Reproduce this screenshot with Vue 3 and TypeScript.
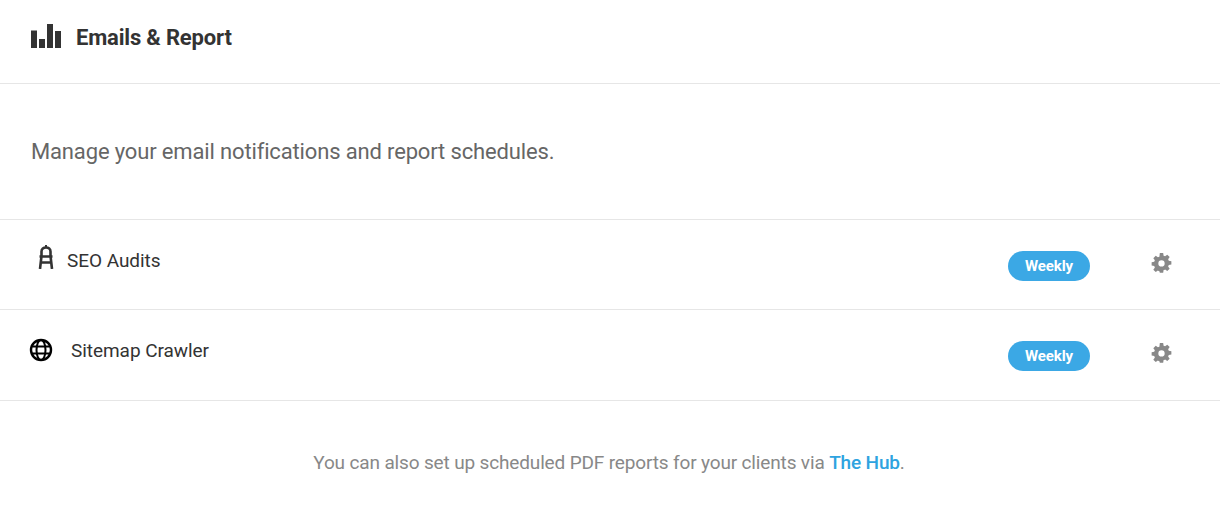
<script setup lang="ts">
const rows = [
  { name: 'SEO Audits', icon: 'tower', frequency: 'Weekly' },
  { name: 'Sitemap Crawler', icon: 'globe', frequency: 'Weekly' }
];

const gearPath =
  'M8.4 0h3.200l.4 2.500c.5.2 1 .4 1.400.6l2.100-1.500 2.300 2.300-1.500 2.100c.3.4.5.9.6 1.400l2.500.4v3.200l-2.500.4c-.1.5-.3 1-.6 1.400l1.500 2.100-2.300 2.300-2.100-1.500c-.4.3-.9.5-1.400.6l-.4 2.500H8.400L8 17.300c-.5-.1-1-.3-1.400-.6l-2.100 1.500-2.300-2.300 1.500-2.100c-.3-.4-.5-.9-.6-1.400L.6 12V8.800L3.100 8.400c.1-.5.3-1 .6-1.400L2.200 4.900l2.300-2.300 2.100 1.500c.4-.3.9-.5 1.400-.6zM10 6.900a3 3 0 1 0 0 6 3 3 0 0 0 0-6z';
</script>

<template>
  <div class="box">
    <header class="box-title">
      <svg class="chart-icon" width="30" height="24" viewBox="0 0 30 24">
        <rect x="0" y="6.500" width="6" height="17.500" />
        <rect x="8" y="15" width="6" height="9" />
        <rect x="16" y="0" width="6" height="24" />
        <rect x="24" y="7" width="6" height="17" />
      </svg>
      <h2>Emails &amp; Report</h2>
    </header>

    <p class="intro">Manage your email notifications and report schedules.</p>

    <div v-for="row in rows" :key="row.name" class="row">
      <div class="row-name" :class="row.icon">
        <svg v-if="row.icon === 'tower'" class="tower-icon" width="16" height="24" viewBox="0 0 16 24" fill="none" stroke="#333" stroke-width="2.600">
          <path d="M3.500 11.500V6.500C3.500 4 5.500 2.500 8 2.500S12.500 4 12.500 6.500v5" />
          <path d="M1.500 11.500h13M3.500 11 2 24M12.500 11 14 24M2.500 17.500h11" />
          <path d="M8 0v2" stroke-width="2" />
        </svg>
        <svg v-else class="globe-icon" width="24" height="24" viewBox="0 0 24 24" fill="none" stroke="#000" stroke-width="2.400">
          <circle cx="12" cy="12" r="10" />
          <ellipse cx="12" cy="12" rx="4.500" ry="10" stroke-width="2" />
          <path d="M2.500 8.500h19M2.500 15.500h19" stroke-width="2" />
        </svg>
        <span>{{ row.name }}</span>
      </div>
      <span class="tag">{{ row.frequency }}</span>
      <button class="gear" aria-label="Configure">
        <svg width="21" height="21" viewBox="0 0 20 20"><path :d="gearPath" fill="#888" fill-rule="evenodd" /></svg>
      </button>
    </div>

    <p class="note">You can also set up scheduled PDF reports for your clients via <a href="#">The Hub</a>.</p>
  </div>
</template>

<style scoped>
.box {
  font-family: Roboto, sans-serif;
  color: #666;
  background: #fff;
}

.box-title {
  display: flex;
  align-items: center;
  height: 84px;
  padding: 0 31px 9px;
  box-sizing: border-box;
  border-bottom: 1px solid #e6e6e6;
}

.chart-icon {
  fill: #333;
  margin-right: 15px;
  margin-bottom: 3px;
}

h2 {
  margin: 0;
  font-size: 22px;
  font-weight: 700;
  letter-spacing: -0.18px;
  color: #333;
}

.intro {
  margin: 0;
  height: 136px;
  padding: 54px 31px 0;
  box-sizing: border-box;
  font-size: 22px;
  line-height: 28px;
  letter-spacing: -0.15px;
  border-bottom: 1px solid #e6e6e6;
}

.row {
  display: flex;
  align-items: center;
  height: 90px;
  box-sizing: border-box;
  padding-right: 48px;
  border-bottom: 1px solid #e6e6e6;
}

.row + .row {
  height: 91px;
}

.row-name {
  flex: 1;
  display: flex;
  align-items: center;
  font-size: 19px;
  font-weight: 400;
  letter-spacing: -0.05px;
  color: #333;
  margin-bottom: 8px;
}

.row-name.globe {
  margin-bottom: 10px;
}

.tower .tower-icon {
  margin-left: 38px;
  margin-right: 13px;
  margin-bottom: 7px;
}

.globe .globe-icon {
  margin-left: 29px;
  margin-right: 18px;
}

.tag {
  width: 82px;
  height: 30px;
  border-radius: 15px;
  background: #3ba8e5;
  color: #fff;
  font-size: 15px;
  font-weight: 700;
  letter-spacing: -0.1px;
  line-height: 30px;
  text-align: center;
  margin-top: 2px;
  margin-right: 61px;
}

.gear {
  display: flex;
  padding: 0;
  border: 0;
  margin-bottom: 3px;
  background: none;
  cursor: pointer;
}

.note {
  margin: 0;
  padding: 50px 2px 0 0;
  font-size: 19px;
  line-height: 24px;
  letter-spacing: -0.15px;
  color: #888;
  text-align: center;
}

.note a {
  color: #2ea3e0;
  font-weight: 500;
  text-decoration: none;
}
</style>
